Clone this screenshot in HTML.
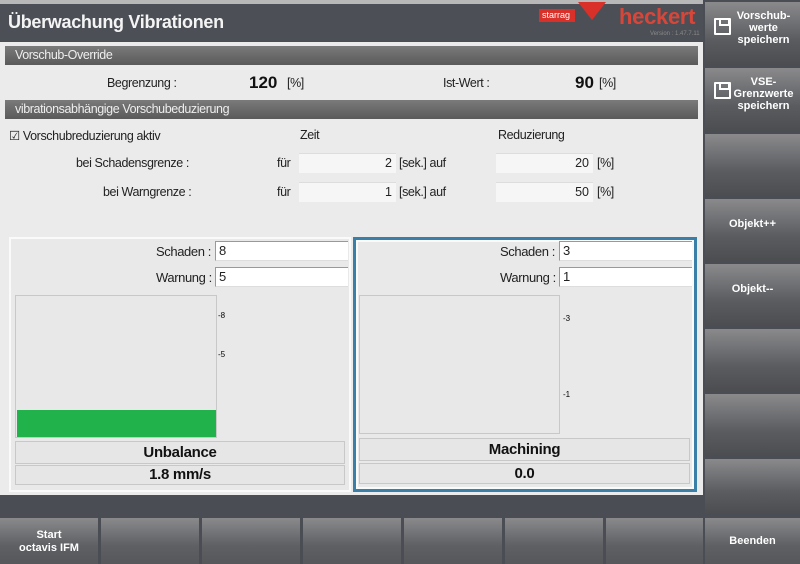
<!DOCTYPE html>
<html><head><meta charset="utf-8"><style>
*{box-sizing:border-box;margin:0;padding:0}
body{width:800px;height:564px;overflow:hidden;background:#4a4e54;font-family:"Liberation Sans",Arial,sans-serif;position:relative}
.a{position:absolute}
.t{font-size:12.5px;letter-spacing:-0.4px;color:#222;white-space:nowrap}
.sec{position:absolute;left:5px;width:693px;height:19px;background:linear-gradient(#7a7a7a,#5a5a5a);color:#eee;font-size:12.5px;letter-spacing:-0.4px;padding:2px 0 0 10px}
.inp{position:absolute;background:#f6f6f6;border-top:1px solid #ddd;font-size:12.5px;text-align:right;padding:2px 4px 0 0;height:20px;color:#222}
.w{position:absolute;background:#fff;border:1px solid #999;border-right:none;border-bottom:1px solid #ddd;font-size:13px;padding:1px 3px;height:20px;color:#222}
.rb{position:absolute;left:705px;width:95px;background:linear-gradient(#8a8a8c,#5a5c60 60%,#4b4d51);color:#fff;font-weight:bold;font-size:11px;text-align:center;line-height:12px}
.bb{position:absolute;top:518px;height:46px;background:linear-gradient(#8a8a8c,#5e6064 60%,#55575b);color:#fff;font-weight:bold;font-size:11px;text-align:center;line-height:13px}
.disk{position:absolute;left:9px;width:17px;height:17px;border:2px solid #fff;border-radius:1px}
.disk:after{content:"";position:absolute;left:3px;top:-2px;width:7px;height:6px;border:2px solid #fff;border-top:none}
.lbl{position:absolute;background:#e6e6e6;border:1px solid #c8c8c8;text-align:center;font-weight:bold;font-size:15px;color:#111;letter-spacing:-0.3px}
</style></head><body>
<!-- header -->
<div class="a" style="left:0;top:0;width:703px;height:41px;background:#4c5056"></div>
<div class="a" style="left:0;top:0;width:703px;height:4px;background:#b8b8b8"></div>
<div class="a" style="left:8px;top:12px;font-size:18px;font-weight:bold;color:#f4f4f4;letter-spacing:-0.3px">Überwachung Vibrationen</div>
<div class="a" style="left:539px;top:9px;width:36px;height:13px;background:#d9302a;color:#fff;font-size:9px;line-height:13px;padding-left:3px">starrag</div>
<div class="a" style="left:578px;top:2px;width:0;height:0;border-left:14px solid transparent;border-right:14px solid transparent;border-top:18px solid #d9302a"></div>
<div class="a" style="left:619px;top:4px;font-size:22px;color:#d8463a;font-weight:bold;letter-spacing:-0.3px">heckert</div>
<div class="a" style="left:650px;top:31px;font-size:6px;color:#888">Version : 1.47.7.11</div>
<!-- main -->
<div class="a" style="left:0;top:42px;width:703px;height:453px;background:#ebebeb"></div>
<div class="sec" style="top:46px">Vorschub-Override</div>
<div class="a t" style="left:107px;top:76px">Begrenzung :</div>
<div class="a" style="left:249px;top:73px;font-size:17px;font-weight:bold;color:#111">120</div>
<div class="a t" style="left:287px;top:76px">[%]</div>
<div class="a t" style="left:443px;top:76px">Ist-Wert :</div>
<div class="a" style="left:575px;top:73px;font-size:17px;font-weight:bold;color:#111">90</div>
<div class="a t" style="left:599px;top:76px">[%]</div>
<div class="sec" style="top:100px">vibrationsabhängige Vorschubeduzierung</div>
<div class="a t" style="left:9px;top:128px">☑ Vorschubreduzierung aktiv</div>
<div class="a t" style="left:300px;top:128px">Zeit</div>
<div class="a t" style="left:498px;top:128px">Reduzierung</div>
<div class="a t" style="left:76px;top:156px">bei Schadensgrenze :</div>
<div class="a t" style="left:277px;top:156px">für</div>
<div class="inp" style="left:299px;top:153px;width:97px">2</div>
<div class="a t" style="left:399px;top:156px">[sek.] auf</div>
<div class="inp" style="left:496px;top:153px;width:97px">20</div>
<div class="a t" style="left:597px;top:156px">[%]</div>
<div class="a t" style="left:103px;top:185px">bei Warngrenze :</div>
<div class="a t" style="left:277px;top:185px">für</div>
<div class="inp" style="left:299px;top:182px;width:97px">1</div>
<div class="a t" style="left:399px;top:185px">[sek.] auf</div>
<div class="inp" style="left:496px;top:182px;width:97px">50</div>
<div class="a t" style="left:597px;top:185px">[%]</div>
<!-- left panel -->
<div class="a" style="left:9px;top:237px;width:342px;height:255px;border:2px solid #fafafa;background:#e9e9e9"></div>
<div class="a t" style="left:156px;top:244px;font-size:13px">Schaden :</div>
<div class="w" style="left:215px;top:241px;width:133px">8</div>
<div class="a t" style="left:156px;top:270px;font-size:13px">Warnung :</div>
<div class="w" style="left:215px;top:267px;width:133px">5</div>
<div class="a" style="left:15px;top:295px;width:202px;height:143px;border:1px solid #c8c8c8;background:#e8e8e8"></div>
<div class="a" style="left:17px;top:410px;width:199px;height:27px;background:#22b24c"></div>
<div class="a" style="left:218px;top:311px;font-size:8px">-8</div>
<div class="a" style="left:218px;top:350px;font-size:8px">-5</div>
<div class="lbl" style="left:15px;top:441px;width:330px;height:23px;line-height:21px">Unbalance</div>
<div class="lbl" style="left:15px;top:465px;width:330px;height:20px;line-height:18px">1.8 mm/s</div>
<!-- right panel -->
<div class="a" style="left:353px;top:237px;width:344px;height:255px;border:3px solid #3a7fa8;background:#e9e9e9;box-shadow:inset 0 0 0 2px #fafafa"></div>
<div class="a t" style="left:500px;top:244px;font-size:13px">Schaden :</div>
<div class="w" style="left:559px;top:241px;width:133px">3</div>
<div class="a t" style="left:500px;top:270px;font-size:13px">Warnung :</div>
<div class="w" style="left:559px;top:267px;width:133px">1</div>
<div class="a" style="left:359px;top:295px;width:201px;height:139px;border:1px solid #c8c8c8;background:#e8e8e8"></div>
<div class="a" style="left:563px;top:314px;font-size:8px">-3</div>
<div class="a" style="left:563px;top:390px;font-size:8px">-1</div>
<div class="lbl" style="left:359px;top:438px;width:331px;height:23px;line-height:21px">Machining</div>
<div class="lbl" style="left:359px;top:463px;width:331px;height:21px;line-height:19px">0.0</div>
<!-- right buttons -->
<div class="rb" style="top:2px;height:63px;padding:8px 0 0 22px"><div class="disk" style="top:16px"></div>Vorschub-<br>werte<br>speichern</div>
<div class="rb" style="top:68px;height:63px;padding:8px 0 0 22px"><div class="disk" style="top:14px"></div>VSE-<br>Grenzwerte<br>speichern</div>
<div class="rb" style="top:134px;height:62px"></div>
<div class="rb" style="top:199px;height:62px;padding-top:19px">Objekt++</div>
<div class="rb" style="top:264px;height:62px;padding-top:19px">Objekt--</div>
<div class="rb" style="top:329px;height:62px"></div>
<div class="rb" style="top:394px;height:62px"></div>
<div class="rb" style="top:459px;height:55px"></div>
<!-- bottom buttons -->
<div class="bb" style="left:0;width:98px;padding-top:11px">Start<br>octavis IFM</div>
<div class="bb" style="left:101px;width:98px"></div>
<div class="bb" style="left:202px;width:98px"></div>
<div class="bb" style="left:303px;width:98px"></div>
<div class="bb" style="left:404px;width:98px"></div>
<div class="bb" style="left:505px;width:98px"></div>
<div class="bb" style="left:606px;width:97px"></div>
<div class="bb" style="left:705px;width:95px;padding-top:17px">Beenden</div>
</body></html>
